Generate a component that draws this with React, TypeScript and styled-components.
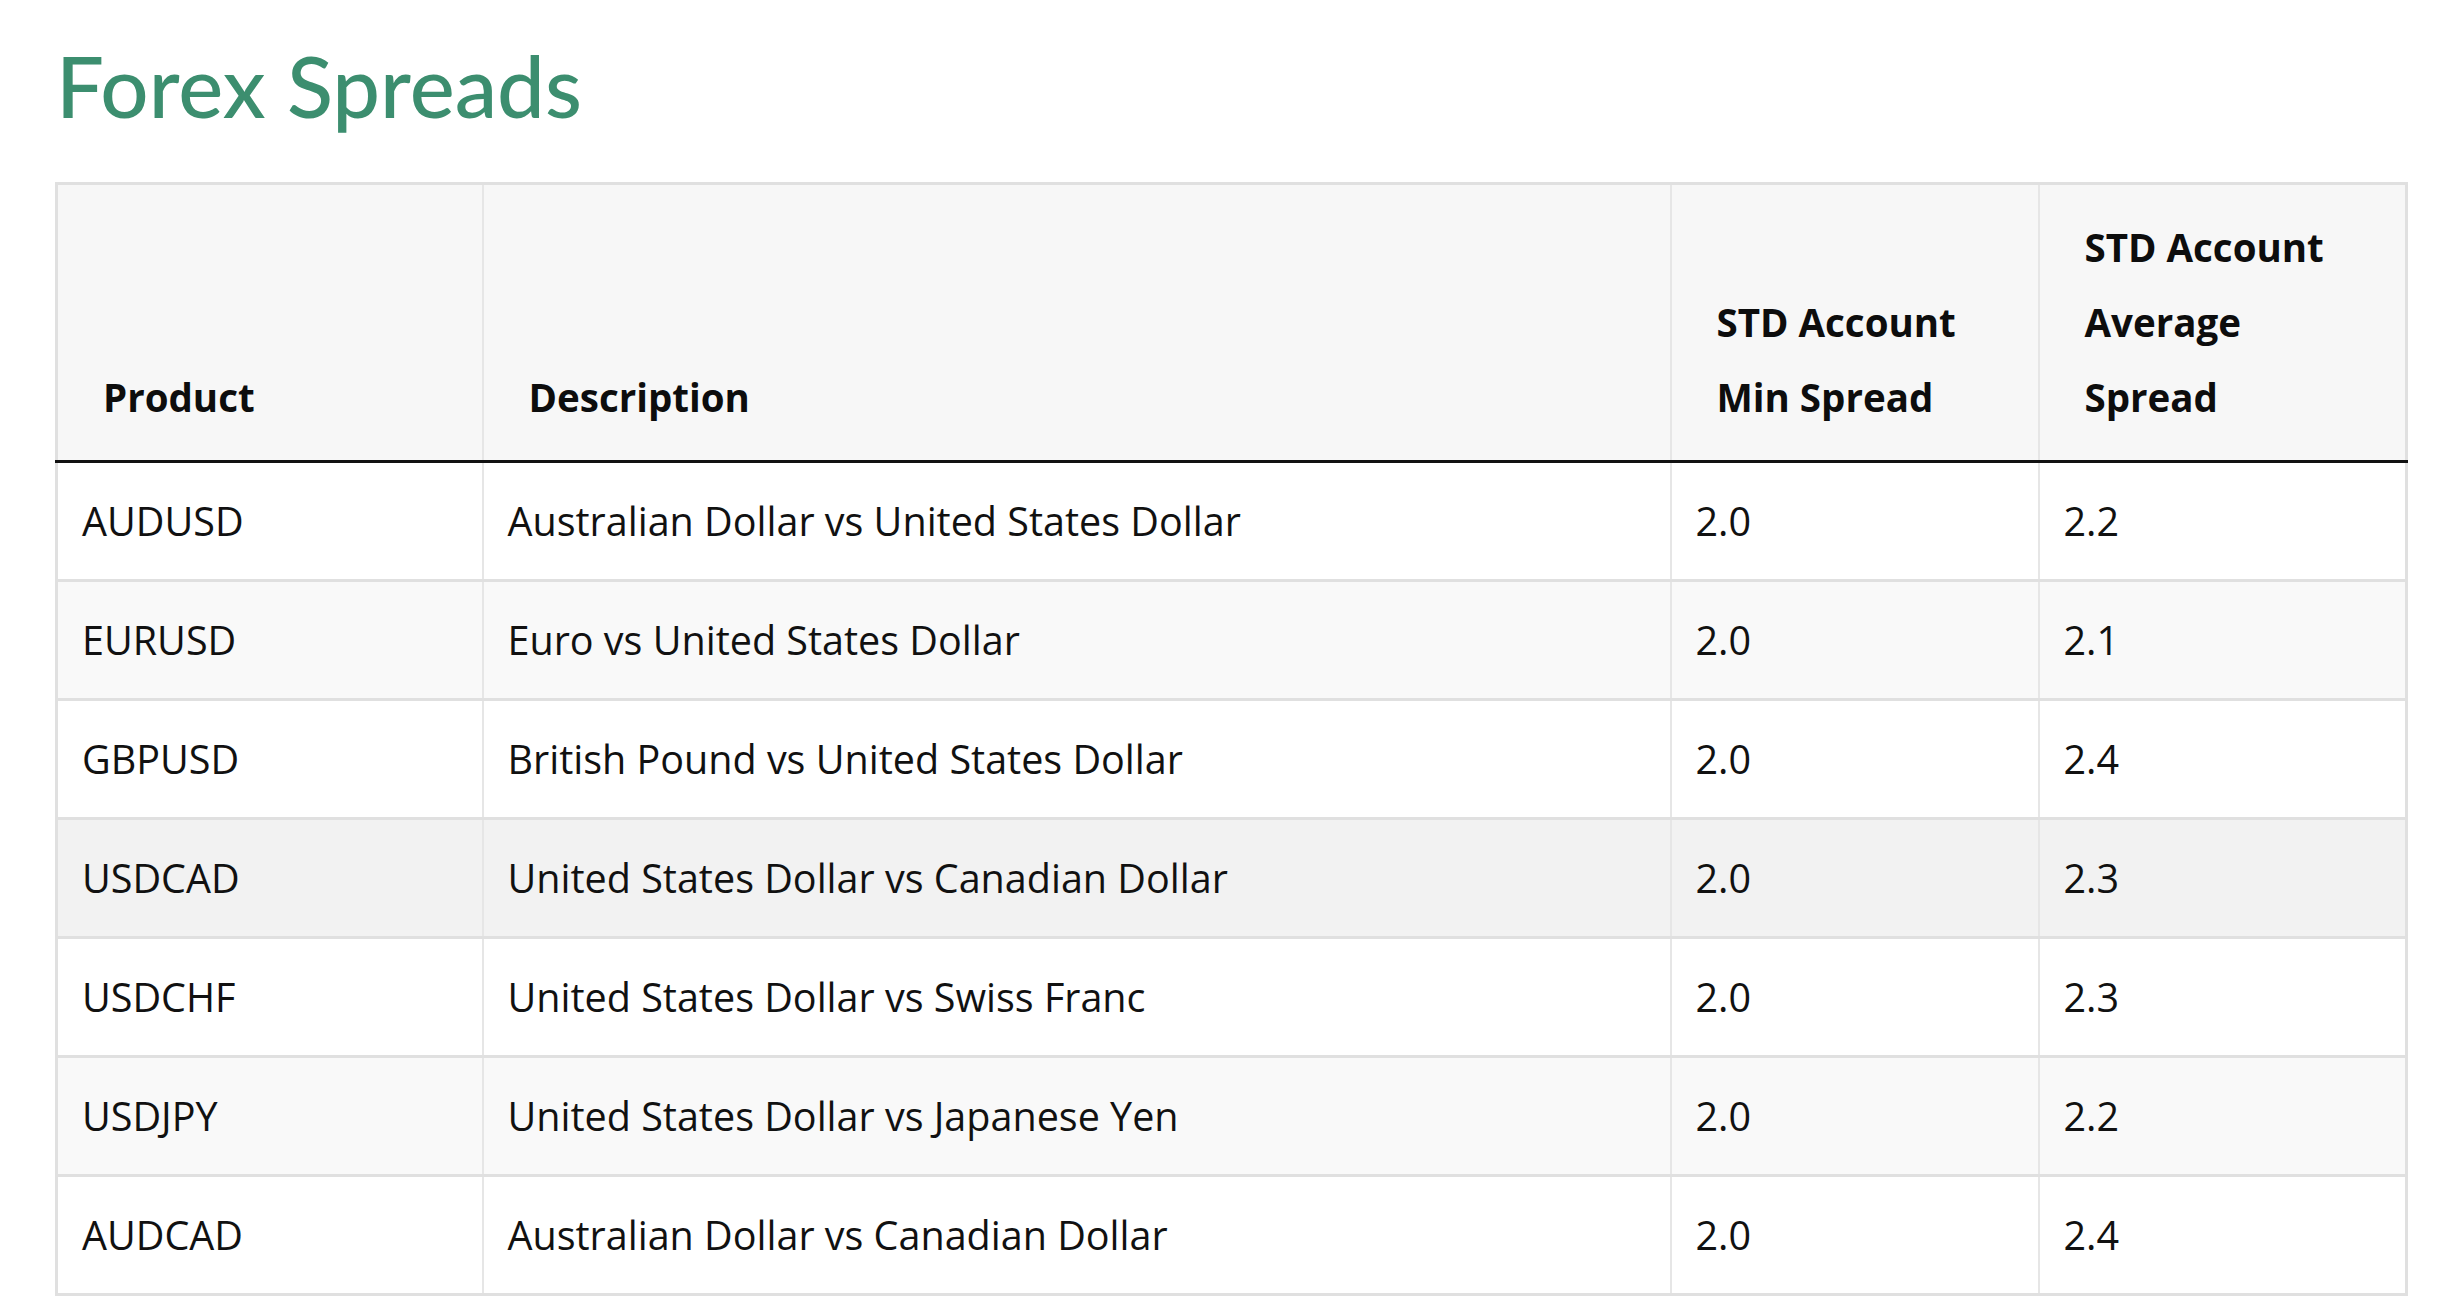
import * as React from 'react';
import styled, { createGlobalStyle } from 'styled-components';

const GlobalStyle = createGlobalStyle`
  html, body {
    margin: 0;
    padding: 0;
    background: #ffffff;
  }
  body {
    font-family: "Open Sans", "Noto Sans", "Liberation Sans", sans-serif;
    color: #111111;
  }
`;

const Page = styled.div`
  padding: 0 50px 0 55px;
`;

const Title = styled.h1`
  margin: 0;
  padding: 34px 0 0 1px;
  height: 182px;
  box-sizing: border-box;
  font-family: Lato, "Noto Sans", sans-serif;
  font-size: 85px;
  line-height: 1.2;
  font-weight: 500;
  color: #3c8e6f;
`;

const Table = styled.table`
  width: 2350px;
  table-layout: fixed;
  border-collapse: collapse;
  border: 3px solid #e0e0e0;
`;

const HeadCell = styled.th`
  padding: 25px 44px 25px 45px;
  text-align: left;
  vertical-align: bottom;
  font-size: 38.5px;
  line-height: 75px;
  font-weight: 700;
  color: #0d0d0d;
  background: #f7f7f7;
  border-left: 2px solid #e6e6e6;
  border-bottom: 3px solid #111111;
`;

const Row = styled.tr<{ $shade: string }>`
  background: ${(p) => p.$shade};
`;

const Cell = styled.td`
  padding: 22px 24px;
  font-size: 39.5px;
  line-height: 72px;
  color: #111111;
  border-left: 2px solid #e6e6e6;
  border-bottom: 3px solid #e0e0e0;
  white-space: nowrap;
  overflow: hidden;
`;

const rows = [
  ['AUDUSD', 'Australian Dollar vs United States Dollar', '2.0', '2.2'],
  ['EURUSD', 'Euro vs United States Dollar', '2.0', '2.1'],
  ['GBPUSD', 'British Pound vs United States Dollar', '2.0', '2.4'],
  ['USDCAD', 'United States Dollar vs Canadian Dollar', '2.0', '2.3'],
  ['USDCHF', 'United States Dollar vs Swiss Franc', '2.0', '2.3'],
  ['USDJPY', 'United States Dollar vs Japanese Yen', '2.0', '2.2'],
  ['AUDCAD', 'Australian Dollar vs Canadian Dollar', '2.0', '2.4'],
];

// USDCAD row shows the hover shade in the screenshot
const shadeFor = (i: number) => {
  if (i === 3) return '#f2f2f2';
  return i % 2 === 1 ? '#f9f9f9' : '#ffffff';
};

export default function App() {
  return (
    <Page>
      <GlobalStyle />
      <Title>Forex Spreads</Title>
      <Table>
        <colgroup>
          <col style={{ width: 426 }} />
          <col style={{ width: 1188 }} />
          <col style={{ width: 368 }} />
          <col style={{ width: 368 }} />
        </colgroup>
        <thead>
          <tr>
            <HeadCell>Product</HeadCell>
            <HeadCell>Description</HeadCell>
            <HeadCell>
              STD Account
              <br />
              Min Spread
            </HeadCell>
            <HeadCell>
              STD Account
              <br />
              Average
              <br />
              Spread
            </HeadCell>
          </tr>
        </thead>
        <tbody>
          {rows.map((r, i) => (
            <Row key={r[0]} $shade={shadeFor(i)}>
              {r.map((c, j) => (
                <Cell key={j}>{c}</Cell>
              ))}
            </Row>
          ))}
        </tbody>
      </Table>
    </Page>
  );
}
